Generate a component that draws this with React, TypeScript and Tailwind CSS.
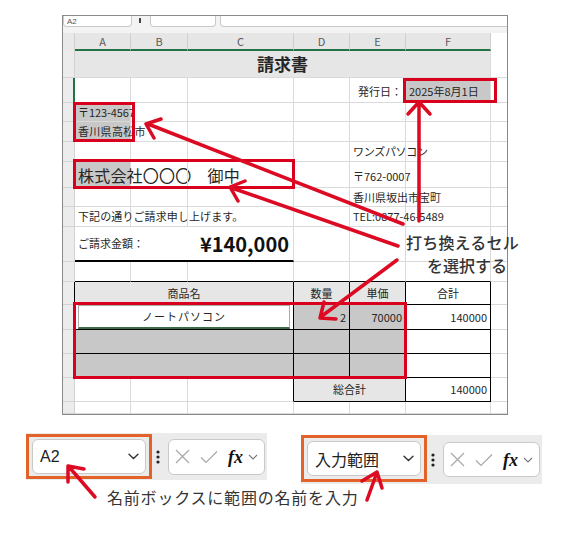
import type { ReactNode } from 'react';

const GRID = 'border-r border-b border-[#dadada]';
const INK = 'border-r border-b border-black';
const SEL = 'bg-[#c8c8c8]';
const HEAD = 'bg-[#e6e6e6]';

function Cell({
  span = 1,
  line = GRID,
  className = '',
  children,
}: {
  span?: number;
  line?: string;
  className?: string;
  children?: ReactNode;
}) {
  const spanCls =
    span === 6 ? 'col-span-6' : span === 3 ? 'col-span-3' : span === 2 ? 'col-span-2' : '';
  return (
    <div
      className={`${spanCls} ${line} flex items-center whitespace-nowrap px-[3px] text-[11px] text-[#262626] ${className}`}
    >
      {children}
    </div>
  );
}

function Rh({ line = 'border-r border-b border-[#d2d2d2]' }: { line?: string }) {
  return <div className={`${line} bg-[#ececec]`} />;
}

function Tail() {
  return <div className="border-b border-[#dadada]" />;
}

function Blank({ n }: { n: number }) {
  return (
    <>
      {Array.from({ length: n }).map((_, i) => (
        <Cell key={i} />
      ))}
    </>
  );
}

function Chevron() {
  return (
    <svg width="11" height="7" viewBox="0 0 11 7" fill="none">
      <path d="M1 1.2 L5.5 5.5 L10 1.2" stroke="#333" strokeWidth="1.4" strokeLinecap="round" />
    </svg>
  );
}

function Dots() {
  return (
    <svg width="4" height="16" viewBox="0 0 4 16">
      <circle cx="2" cy="3" r="1.6" fill="#222" />
      <circle cx="2" cy="8" r="1.6" fill="#222" />
      <circle cx="2" cy="13" r="1.6" fill="#222" />
    </svg>
  );
}

function FormulaBox({ className = '' }: { className?: string }) {
  return (
    <div
      className={`flex w-[97px] items-center rounded-[6px] border border-[#c9c9c9] bg-white pl-[6px] ${className}`}
    >
      <svg width="15" height="15" viewBox="0 0 15 15" fill="none">
        <path d="M1 1 L14 14 M14 1 L1 14" stroke="#a8a8a8" strokeWidth="1.2" />
      </svg>
      <svg className="ml-[10px]" width="18" height="14" viewBox="0 0 18 14" fill="none">
        <path d="M1 7.5 L6 12.5 L17 1.5" stroke="#a8a8a8" strokeWidth="1.2" />
      </svg>
      <span className="ml-[10px] font-['Liberation_Serif',serif] text-[18px] font-bold italic leading-none text-[#111]">
        fx
      </span>
      <span className="ml-[5px] flex">
        <svg width="10" height="6" viewBox="0 0 10 6" fill="none">
          <path d="M1 1 L5 5 L9 1" stroke="#777" strokeWidth="1.1" />
        </svg>
      </span>
    </div>
  );
}

function NameBar({
  name,
  textCls,
  tall,
}: {
  name: string;
  textCls: string;
  tall?: boolean;
}) {
  return (
    <div className={`flex items-center bg-[#ebebeb] pr-[2px] ${tall ? 'h-[49px]' : 'h-[47px]'}`}>
      <div
        className={`flex w-[126px] items-center border-[3px] border-[#e2622a] px-[3px] ${
          tall ? 'h-[47px] self-start' : 'h-[45px]'
        }`}
      >
        <div className="flex h-[35px] w-full items-center justify-between rounded-[6px] border border-[#c9c9c9] bg-white pl-[7px] pr-[6px]">
          <span className={textCls}>{name}</span>
          <Chevron />
        </div>
      </div>
      <div className="ml-[4px] flex">
        <Dots />
      </div>
      <FormulaBox className={`ml-[8px] ${tall ? 'h-[35px]' : 'h-[36px]'}`} />
    </div>
  );
}

function Sheet() {
  return (
    <div className="grid grid-cols-[12px_56px_57px_106px_56px_56px_85px_16px] grid-rows-[18px_27px_25px_19px_20px_20px_26px_19px_20px_35px_20px_23px_25px_24px_24px_24px_12px]">
      {/* column headers */}
      <div className="border-r border-[#cfcfcf] bg-[#e9e9e9]" />
      {['A', 'B', 'C', 'D', 'E', 'F'].map((c) => (
        <div
          key={c}
          className="flex items-center justify-center border-r border-b-2 border-r-[#cfcfcf] border-b-[#217346] bg-[#e6e6e6] text-[11px] text-[#5a5a5a]"
        >
          {c}
        </div>
      ))}
      <div />

      {/* 1 */}
      <Rh />
      <Cell span={6} className={`${HEAD} justify-center text-[17px] font-bold text-[#111]`}>
        請求書
      </Cell>
      <Tail />

      {/* 2 */}
      <Rh line="border-b border-b-[#d2d2d2] border-r-2 border-r-[#217346]" />
      <Blank n={4} />
      <Cell className="justify-end pt-[3px]">発行日：</Cell>
      <Cell className={`${SEL} pt-[3px] text-[11.5px]`}>2025年8月1日</Cell>
      <Tail />

      {/* 3 */}
      <Rh />
      <Cell className={`${SEL} tracking-[-0.1px]`}>〒123-4567</Cell>
      <Blank n={5} />
      <Tail />

      {/* 4 */}
      <Rh />
      <Cell className={`${SEL} tracking-[0.3px]`}>香川県高松市</Cell>
      <Blank n={5} />
      <Tail />

      {/* 5 */}
      <Rh />
      <Blank n={4} />
      <Cell className="tracking-[-0.3px]">ワンズパソコン</Cell>
      <Cell />
      <Tail />

      {/* 6 */}
      <Rh />
      <Cell className={`${SEL} text-[16px] tracking-[0.2px]`}>株式会社〇〇〇　御中</Cell>
      <Blank n={3} />
      <Cell className="pt-[4px]">〒762-0007</Cell>
      <Cell />
      <Tail />

      {/* 7 */}
      <Rh />
      <Blank n={4} />
      <Cell>香川県坂出市宝町</Cell>
      <Cell />
      <Tail />

      {/* 8 */}
      <Rh />
      <Cell className="tracking-[0.1px]">下記の通りご請求申し上げます。</Cell>
      <Blank n={3} />
      <Cell>TEL:0877-46-5489</Cell>
      <Cell />
      <Tail />

      {/* 9 */}
      <Rh />
      <Cell
        span={3}
        line="border-r border-r-[#dadada] border-b-2 border-b-black"
        className="justify-between pr-[4px]"
      >
        <span>ご請求金額：</span>
        <span className="text-[20px] font-bold text-[#111]">¥140,000</span>
      </Cell>
      <Blank n={3} />
      <Tail />

      {/* 10 */}
      <Rh />
      {[0, 1, 2, 3, 4, 5].map((i) => (
        <Cell key={i} line="border-r border-b border-r-[#dadada] border-b-black" />
      ))}
      <Tail />

      {/* 11 */}
      <Rh line="border-b border-r border-b-[#d2d2d2] border-r-black" />
      <Cell span={3} line={INK} className={`${HEAD} justify-center`}>
        商品名
      </Cell>
      <Cell line={INK} className={`${HEAD} justify-center`}>
        数量
      </Cell>
      <Cell line={INK} className={`${HEAD} justify-center`}>
        単価
      </Cell>
      <Cell line={INK} className="justify-center">
        合計
      </Cell>
      <Tail />

      {/* 12 */}
      <Rh line="border-b border-r border-b-[#d2d2d2] border-r-black" />
      <Cell span={3} line={INK} className="px-0">
        <div className="flex h-full w-full items-center justify-center border border-b-2 border-[#a9a9a9] border-b-[#3b6b48] bg-white tracking-[1px]">
          ノートパソコン
        </div>
      </Cell>
      <Cell line={INK} className={`${SEL} justify-end`}>
        2
      </Cell>
      <Cell line={INK} className={`${SEL} justify-end`}>
        70000
      </Cell>
      <Cell line={INK} className="justify-end">
        140000
      </Cell>
      <Tail />

      {/* 13 */}
      <Rh line="border-b border-r border-b-[#d2d2d2] border-r-black" />
      <Cell span={3} line={INK} className={SEL} />
      <Cell line={INK} className={SEL} />
      <Cell line={INK} className={SEL} />
      <Cell line={INK} />
      <Tail />

      {/* 14 */}
      <Rh line="border-b border-r border-b-[#d2d2d2] border-r-black" />
      <Cell span={3} line={INK} className={SEL} />
      <Cell line={INK} className={SEL} />
      <Cell line={INK} className={SEL} />
      <Cell line={INK} />
      <Tail />

      {/* 15 */}
      <Rh />
      <Cell />
      <Cell />
      <Cell line="border-r border-b border-r-black border-b-[#dadada]" />
      <Cell span={2} line={INK} className={`${HEAD} justify-center`}>
        総合計
      </Cell>
      <Cell line={INK} className="justify-end">
        140000
      </Cell>
      <Tail />

      {/* 16 */}
      <Rh />
      <Blank n={6} />
      <Tail />
    </div>
  );
}

function TopStrip() {
  return (
    <div className="flex h-[11px] items-start overflow-hidden">
      <div className="flex h-[11px] w-[69px] items-center rounded-b-[4px] border border-t-0 border-[#c9c9c9] bg-white pl-[3px]">
        <span className="font-['Liberation_Sans',sans-serif] text-[8px] leading-[9px] text-[#555]">A2</span>
      </div>
      <div className="ml-[7px] mt-[2px] h-[5px] w-[2px] bg-[#444]" />
      <div className="ml-[9px] h-[11px] w-[66px] rounded-b-[4px] border border-t-0 border-[#c9c9c9] bg-white" />
      <div className="ml-[4px] h-[11px] flex-1 rounded-bl-[4px] border border-t-0 border-r-0 border-[#c9c9c9] bg-white" />
    </div>
  );
}

function RedBox({ cls }: { cls: string }) {
  return <div className={`pointer-events-none absolute border-[3px] border-[#d9001e] ${cls}`} />;
}

export default function App() {
  return (
    <div className="relative h-[534px] w-[562px] overflow-hidden bg-white font-['Noto_Sans_CJK_JP',sans-serif]">
      <div className="pl-[62px] pt-[15px]">
        <div className="h-[400px] w-[446px] overflow-hidden border border-[#8a8a8a] bg-[#f3f3f3]">
          <TopStrip />
          <div className="h-[6px]" />
          <div className="bg-white">
            <Sheet />
          </div>
        </div>
      </div>

      <div className="mt-[18px] flex items-start pl-[26px]">
        <NameBar name="A2" textCls="font-['Liberation_Sans',sans-serif] text-[16px] text-[#222]" />
        <div className="ml-[34px] mt-[2px]">
          <NameBar name="入力範囲" tall textCls="text-[16px] text-[#222]" />
        </div>
      </div>

      <p className="ml-[107px] mt-[3px] text-[16px] leading-[20px] tracking-[0.8px] text-[#333]">
        名前ボックスに範囲の名前を入力
      </p>

      {/* annotations */}
      <RedBox cls="left-[403px] top-[78px] h-[25px] w-[94px]" />
      <RedBox cls="left-[73px] top-[102px] h-[40px] w-[62px]" />
      <RedBox cls="left-[73px] top-[159px] h-[30px] w-[222px]" />
      <RedBox cls="left-[73px] top-[302px] h-[77px] w-[334px]" />

      <svg
        className="pointer-events-none absolute left-0 top-0"
        width="562"
        height="534"
        viewBox="0 0 562 534"
        fill="none"
        stroke="#dc0a23"
        strokeWidth="3.5"
        strokeLinecap="round"
        strokeLinejoin="round"
      >
        <path d="M419 221 L419 103 M408 114 L419 102 L430 114" />
        <path d="M403 224 L148 124 M161 119 L146 124 L154 138" />
        <path d="M398 246 L232 188 M245 181 L230 187 L238 201" />
        <path d="M397 260 L322 316 M324 302 L320 318 L336 319" />
        <path d="M95 497 L70 468 M84 469 L68 466 L68 482" />
        <path d="M367 500 L376 475 M382 488 L377 472 L362 481" />
      </svg>

      <div className="pointer-events-none absolute left-[406px] top-[231px] text-[16px] font-medium leading-[22px] tracking-[0.2px] text-[#333]">
        打ち換えるセル
      </div>
      <div className="pointer-events-none absolute left-[427px] top-[254px] text-[16px] font-medium leading-[22px] text-[#333]">
        を選択する
      </div>
    </div>
  );
}
